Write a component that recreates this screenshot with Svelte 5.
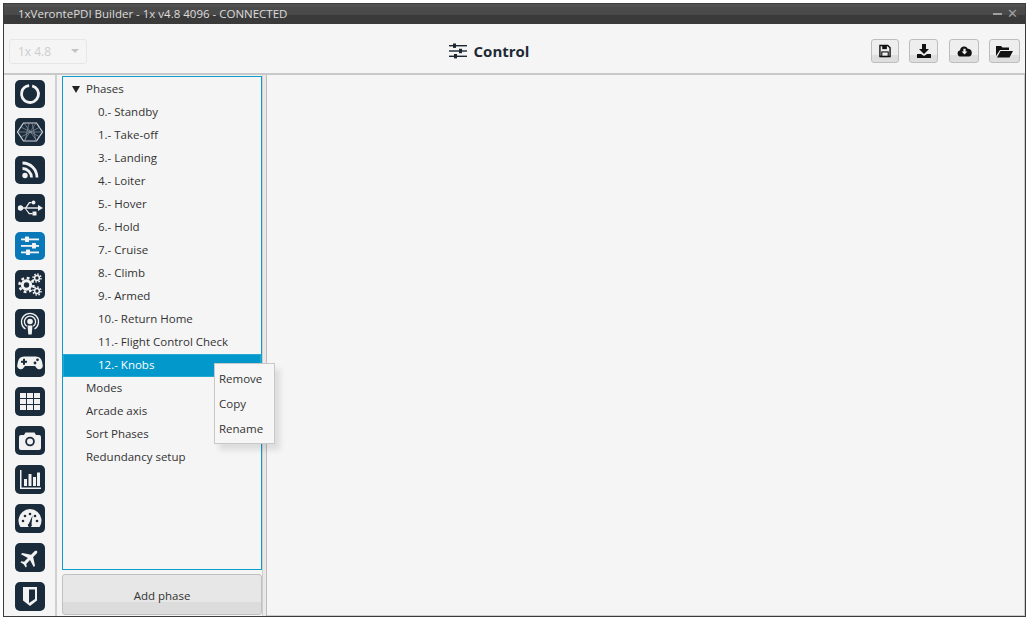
<script>
  const phases = ['0.- Standby','1.- Take-off','3.- Landing','4.- Loiter','5.- Hover','6.- Hold','7.- Cruise','8.- Climb','9.- Armed','10.- Return Home','11.- Flight Control Check'];
  const roots = ['Modes','Arcade axis','Sort Phases','Redundancy setup'];
</script>

<div class="window">
  <div class="title">
    <span>1xVerontePDI Builder - 1x v4.8 4096 - CONNECTED</span>
    <div class="winbtns"><i class="min"></i><b>✕</b></div>
  </div>
  <div class="toolbar">
    <div class="combo"><span>1x 4.8</span><i class="caret"></i></div>
    <div class="heading">
      <svg width="18" height="16" viewBox="0 0 18 16"><g fill="#1c2733"><rect x="0" y="2" width="18" height="1.4"/><rect x="0" y="7.3" width="18" height="1.4"/><rect x="0" y="12.6" width="18" height="1.4"/><rect x="4" y="0.5" width="3" height="4.4"/><rect x="10" y="5.8" width="3" height="4.4"/><rect x="5" y="11" width="3" height="4.4"/></g></svg>
      <span>Control</span>
    </div>
    <div class="actions">
      <button class="tb w28" aria-label="Save"><svg width="12" height="14" viewBox="0 0 13 14"><path d="M1 1h8.500L12 3.500V13H1z" fill="none" stroke="#111" stroke-width="1.500"/><rect x="3.500" y="1" width="5" height="4" fill="#111"/><rect x="3" y="8" width="7" height="5" fill="none" stroke="#111" stroke-width="1.200"/></svg></button>
      <button class="tb w29" aria-label="Download"><svg width="14" height="14" viewBox="0 0 14 14"><path d="M5 0h4v5h3L7 10 2 5h3z" fill="#111"/><path d="M0 10h4l3 2 3-2h4v4H0z" fill="#111"/></svg></button>
      <button class="tb w30" aria-label="Cloud download"><svg width="15" height="12" viewBox="0 0 16 13"><path d="M4 12.500a3.500 3.500 0 0 1-.8-6.900A4.500 4.500 0 0 1 11.600 4 4.300 4.300 0 0 1 12.500 12.500z" fill="#111"/><path d="M6.800 4h2.400v3h2L8 10.300 4.800 7h2z" fill="#eee"/></svg></button>
      <button class="tb w31" aria-label="Open"><svg width="17" height="13" viewBox="0 0 17 13"><path d="M0 1h5l1.500 1.500H13V5H4L0 11z" fill="#111"/><path d="M4.500 6H17l-3.500 6.500H1z" fill="#111"/></svg></button>
    </div>
  </div>
  <div class="body">
    <nav class="rail">
      <div class="nav s"><svg viewBox="0 0 30 28"><circle cx="15" cy="14" r="8.500" fill="none" stroke="#f2f2f2" stroke-width="2.800" stroke-dasharray="50 3.400" transform="rotate(-75 15 14)"/></svg></div>
      <div class="nav s"><svg viewBox="0 0 30 28"><g fill="none" stroke="#8f979f" stroke-width=".7"><path d="M8.500 5h13l6 9-6 9h-13l-6-9z" stroke="#d5d8da" stroke-width="1.200"/><path d="M9 5l13 18M21 5L9 23M3 14h24M14 5l-4 18M17 5l4 18M6 9l19 10M25 9L6 19"/></g></svg></div>
      <div class="nav s"><svg viewBox="0 0 30 28"><g fill="none" stroke="#f2f2f2" stroke-width="2.800"><path d="M7.500 12.500a9 9 0 0 1 9 9"/><path d="M7.500 7a14.500 14.500 0 0 1 14.500 14.500"/></g><circle cx="10" cy="19.500" r="2.700" fill="#f2f2f2"/></svg></div>
      <div class="nav s"><svg viewBox="0 0 30 28"><g fill="#f2f2f2"><circle cx="5.500" cy="14" r="2.700"/><path d="M5 13.300h19v1.400H5z"/><path d="M23 11l5 3-5 3z"/><path d="M10 14l4-6h2.500v1.200h-1.800L11.500 14z"/><path d="M10.500 14l4 5h3v1.200h-3.600L9.800 14.500z"/><circle cx="18.500" cy="8.500" r="1.900"/><rect x="17.500" y="17.500" width="4" height="4"/></g></svg></div>
      <div class="nav s on"><svg viewBox="0 0 30 28"><g fill="#f2f2f2"><rect x="6" y="6.500" width="18" height="1.800"/><rect x="6" y="13" width="18" height="1.800"/><rect x="6" y="19.500" width="18" height="1.800"/><rect x="10" y="4.500" width="4" height="5.500" rx=".5"/><rect x="17" y="11" width="4" height="5.500" rx=".5"/><rect x="11" y="17.500" width="4" height="5.500" rx=".5"/></g></svg></div>
      <div class="nav"><svg viewBox="0 0 30 29"><g fill="#f2f2f2"><circle cx="11.500" cy="15" r="4.200" fill="none" stroke="#f2f2f2" stroke-width="3"/><circle cx="11.500" cy="15" r="7" fill="none" stroke="#f2f2f2" stroke-width="2.500" stroke-dasharray="2.800 2.700"/></g><g fill="none" stroke="#f2f2f2"><circle cx="22" cy="8" r="2.400" stroke-width="1.500"/><circle cx="22" cy="8" r="4" stroke-width="1.500" stroke-dasharray="1.600 1.500"/><circle cx="22" cy="21" r="2.400" stroke-width="1.500"/><circle cx="22" cy="21" r="4" stroke-width="1.500" stroke-dasharray="1.600 1.500"/></g></svg></div>
      <div class="nav"><svg viewBox="0 0 30 29"><g fill="none" stroke="#f2f2f2" stroke-width="1.300"><path d="M10.500 20a8.500 8.500 0 1 1 9 0"/><path d="M11.800 17.300a5.600 5.600 0 1 1 6.400 0"/></g><circle cx="15" cy="12.500" r="2.800" fill="#f2f2f2"/><path d="M12.500 16.500h5l-.8 9h-3.400z" fill="#f2f2f2"/></svg></div>
      <div class="nav"><svg viewBox="0 0 30 29"><path d="M9 8.500h12a6.500 6.500 0 0 1 6 5l.7 3.500a3.500 3.500 0 0 1-6.300 2.700L20 18H10l-1.400 1.700A3.500 3.500 0 0 1 2.300 17L3 13.500a6.500 6.500 0 0 1 6-5z" fill="#f2f2f2"/><g fill="#1a2b3c"><rect x="8" y="10.800" width="2" height="6"/><rect x="6" y="12.800" width="6" height="2"/><circle cx="22.500" cy="11.800" r="1.400"/><circle cx="20" cy="15" r="1.400"/></g></svg></div>
      <div class="nav"><svg viewBox="0 0 30 29"><g fill="#f2f2f2"><rect x="5" y="6" width="6" height="5"/><rect x="12" y="6" width="6" height="5"/><rect x="19" y="6" width="6" height="5"/><rect x="5" y="12" width="6" height="5"/><rect x="12" y="12" width="6" height="5"/><rect x="19" y="12" width="6" height="5"/><rect x="5" y="18" width="6" height="5"/><rect x="12" y="18" width="6" height="5"/><rect x="19" y="18" width="6" height="5"/></g></svg></div>
      <div class="nav"><svg viewBox="0 0 30 29"><path d="M10.500 6.500h9L21 9h3a2 2 0 0 1 2 2v11a2 2 0 0 1-2 2H6a2 2 0 0 1-2-2V11a2 2 0 0 1 2-2h3z" fill="#f2f2f2"/><circle cx="15" cy="15.500" r="4.800" fill="#1a2b3c"/><circle cx="15" cy="15.500" r="3" fill="#f2f2f2"/></svg></div>
      <div class="nav"><svg viewBox="0 0 30 29"><g fill="#f2f2f2"><rect x="5" y="5" width="1.500" height="18"/><rect x="5" y="22.500" width="21" height="1.500"/><rect x="9" y="14" width="3" height="7"/><rect x="13.500" y="9" width="3" height="12"/><rect x="18" y="12" width="3" height="9"/><rect x="22" y="7.500" width="3" height="13.500"/></g></svg></div>
      <div class="nav"><svg viewBox="0 0 30 29"><path d="M5.500 23A11.500 11.500 0 1 1 24.500 23z" fill="#f2f2f2"/><g fill="#1a2b3c"><circle cx="8" cy="17" r="1.300"/><circle cx="10" cy="12" r="1.300"/><circle cx="15" cy="10" r="1.300"/><circle cx="20" cy="12" r="1.300"/><circle cx="22" cy="17" r="1.300"/><path d="M17.500 11.500l-1 8.500a2 2 0 1 1-2.600-.6z"/></g></svg></div>
      <div class="nav"><svg viewBox="0 0 512 512" class="pad"><path fill="#f2f2f2" transform="rotate(45 256 256)" d="M448 336v-40L288 192V79.200c0-17.700-14.800-31.200-32-31.200s-32 13.500-32 31.200V192L64 296v40l160-48v113.600l-48 31.200V464l80-16 80 16v-31.200l-48-31.200V288l160 48z"/></svg></div>
      <div class="nav"><svg viewBox="0 0 30 29"><path d="M8 5h14v13.500l-7 5.500-7-5.500z" fill="#f2f2f2"/><path d="M14 7.500h6V17l-6 4z" fill="#1a2b3c"/></svg></div>
    </nav>
    <div class="divider"></div>
    <aside class="side">
      <div class="tree">
        <div class="row root"><i class="tri"></i>Phases</div>
        {#each phases as p}
          <div class="row leaf">{p}</div>
        {/each}
        <div class="row leaf sel">12.- Knobs</div>
        {#each roots as r}
          <div class="row root">{r}</div>
        {/each}
        <ul class="menu">
          <li>Remove</li>
          <li>Copy</li>
          <li>Rename</li>
        </ul>
      </div>
      <button class="add">Add phase</button>
    </aside>
    <div class="splitter"></div>
    <main class="content"></main>
  </div>
</div>

<style>
  :global(body) { margin: 0; background: #fff; }
  .window { box-sizing: border-box; width: 1023px; height: 614px; margin: 3px 0 0 3px; border: 1px solid #3c3c3c; border-top-width: 0; background: #f5f5f5; display: flex; flex-direction: column; font-family: "Open Sans", "Noto Sans", sans-serif; overflow: hidden; }
  .title { height: 21px; flex: none; display: flex; align-items: center; justify-content: space-between; padding: 0 7px 0 14px; color: #dcdcdc; font-size: 11.5px; background: linear-gradient(#3e3e3e 0 1px, #515151 1px 4px, #4a4a4a 4px 12px, #3a3a3a 12px); }
  .winbtns { display: flex; align-items: center; gap: 5px; color: #a0a0a0; }
  .winbtns b { font-size: 13px; line-height: 12px; font-family: "DejaVu Sans", sans-serif; font-weight: 700; }
  .min { width: 9px; height: 2px; background: #a0a0a0; }
  .toolbar { height: 51px; flex: none; box-sizing: border-box; display: flex; align-items: center; justify-content: space-between; padding: 5px 5px 0 5px; border-bottom: 2px solid #c9c9c9; }
  .combo { width: 78px; height: 25px; box-sizing: border-box; border: 1px solid #e6e6e6; border-radius: 3px; display: flex; align-items: center; justify-content: space-between; padding: 0 7px 0 8px; color: #cdcdcd; font-size: 12px; }
  .caret { width: 0; height: 0; border: 4px solid transparent; border-top: 4px solid #c4c4c4; border-bottom: 0; }
  .heading { display: flex; align-items: center; gap: 7px; margin-left: 20px; font-size: 15px; font-weight: 700; color: #1d2a36; }
  .actions { display: flex; gap: 10px; }
  .tb { height: 24px; padding: 0; border: 1px solid #bdbdbd; border-radius: 3px; background: linear-gradient(#eeeeee 0 70%, #dedede 70%); display: flex; align-items: center; justify-content: center; }
  .w28 { width: 28px; } .w29 { width: 29px; } .w30 { width: 30px; margin-left: 1px; } .w31 { width: 31px; }
  .body { flex: 1; min-height: 0; display: flex; }
  .rail { width: 51px; flex: none; box-sizing: border-box; padding: 5px 0 0 11px; display: flex; flex-direction: column; gap: 10px; }
  .nav { width: 30px; height: 29px; border-radius: 5px; background: #1a2b3c; flex: none; display: flex; }
  .nav.s { height: 28px; }
  .nav.on { background: #0878b8; }
  .nav svg { width: 30px; height: 100%; display: block; }
  .nav svg.pad { width: 24px; height: 24px; margin: auto; }
  .divider { width: 2px; flex: none; background: #cfcfcf; }
  .side { width: 200px; margin-left: 5px; flex: none; display: flex; flex-direction: column; padding-top: 1px; }
  .tree { position: relative; flex: none; height: 494px; box-sizing: border-box; border: 1px solid #0e9ccb; padding: 1px 0; font-size: 11.5px; color: #333; }
  .row { height: 23px; line-height: 22px; white-space: nowrap; box-sizing: border-box; }
  .root { padding-left: 23px; position: relative; }
  .leaf { padding-left: 35px; }
  .tri { position: absolute; left: 9px; top: 8px; width: 0; height: 0; border: 4.5px solid transparent; border-top: 7px solid #222; border-bottom: 0; }
  .sel { background: #0398cc; color: #fff; border: 1px solid #26a8d4; padding-left: 34px; line-height: 20px; }
  .menu { position: absolute; left: 151px; top: 286px; margin: 0; padding: 3px 0 1px; width: 61px; box-sizing: border-box; list-style: none; background: #f6f6f6; border: 1px solid #c8c8c8; box-shadow: 5px 6px 6px rgba(0,0,0,.1); font-size: 11.5px; color: #333; }
  .menu li { height: 25px; line-height: 24px; padding-left: 4px; }
  .add { margin-top: 4px; flex: 1; min-height: 0; margin-bottom: 1px; border: 1px solid #c0c0c0; border-radius: 3px; background: linear-gradient(#e7e7e7 0 69%, #dcdcdc 69%); font-family: inherit; font-size: 11.5px; color: #333; padding: 2px 0 0; }
  .splitter { width: 5px; flex: none; box-sizing: border-box; border-left: 1px solid #cfcfcf; border-right: 1px solid #bdbdbd; background: #e9e9e9; }
  .content { flex: 1; background: #f5f5f5; border-right: 1px solid #ccc; border-bottom: 1px solid #ccc; }
</style>
